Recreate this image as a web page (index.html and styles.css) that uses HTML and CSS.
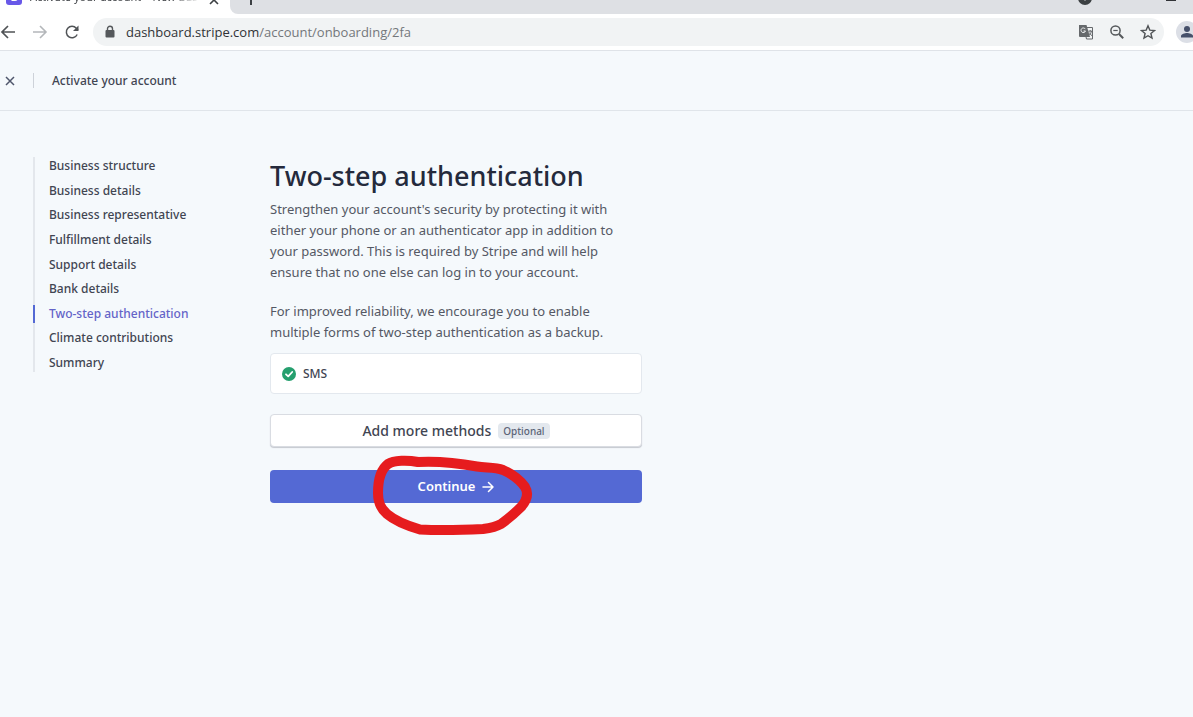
FILE: index.html
```html
<!DOCTYPE html>
<html lang="en">
<head>
<meta charset="utf-8">
<title>Activate your account</title>
<link rel="stylesheet" href="styles.css">
</head>
<body>
<div class="tabstrip">
  <div class="tab">
    <svg class="favicon" width="16" height="16" viewBox="0 0 16 16"><rect width="16" height="16" rx="3" fill="#6858e8"/><path d="M5.500 11h3.500c2.500 0 2.500-4 0-4H6" fill="none" stroke="#fff" stroke-width="2"/></svg>
    <span class="tab-title">Activate your account – New Bus</span>
    <button class="tab-close" aria-label="Close tab"><svg width="10" height="10" viewBox="0 0 10 10"><path d="M1 1l8 8M9 1L1 9" stroke="#3c4043" stroke-width="1.600"/></svg></button>
  </div>
  <div class="strip-rest">
    <button class="new-tab" aria-label="New tab"><svg width="12" height="12" viewBox="0 0 12 12"><path d="M6 0v12M0 6h12" stroke="#3c4043" stroke-width="2"/></svg></button>
    <span class="window-tools">
      <svg width="14" height="14" viewBox="0 0 14 14"><circle cx="7" cy="7" r="7" fill="#3c4043"/><path d="M4 6h6l-3 4z" fill="#dee0e4"/></svg>
      <svg width="10" height="14" viewBox="0 0 10 14"><path d="M0 9h10" stroke="#303236" stroke-width="2"/></svg>
    </span>
  </div>
</div>
<div class="toolbar">
  <button class="tool" aria-label="Back"><svg width="16" height="16" viewBox="0 0 16 16"><path d="M15 8H2M8 2L2 8l6 6" fill="none" stroke="#505356" stroke-width="1.700"/></svg></button>
  <button class="tool" aria-label="Forward"><svg width="16" height="16" viewBox="0 0 16 16"><path d="M1 8h13M8 2l6 6-6 6" fill="none" stroke="#b4b7ba" stroke-width="1.600"/></svg></button>
  <button class="tool" aria-label="Reload"><svg width="16" height="16" viewBox="0 0 16 16"><path d="M13.200 10.500A5.700 5.700 0 1 1 12.300 4.200L14 6" fill="none" stroke="#505356" stroke-width="1.500"/><path d="M14.500 1.500v5.500H9z" fill="#505356"/></svg></button>
  <div class="address">
    <svg width="10" height="14" viewBox="0 0 10 14"><rect x="0.500" y="5" width="9" height="7.500" rx="1" fill="#55585b"/><path d="M2.500 6V3.800a2.500 2.500 0 0 1 5 0V6" fill="none" stroke="#55585b" stroke-width="1.400"/></svg>
    <span class="url"><span class="host">dashboard.stripe.com</span>/account/onboarding/2fa</span>
    <span class="address-tools">
      <svg width="16" height="16" viewBox="0 0 16 16"><path d="M1 1h7.500l3.500 12H2a1 1 0 0 1-1-1z" fill="#66696c"/><path d="M9 3.500h5.500V15H8.500L8 12.800" fill="none" stroke="#66696c"/><path d="M7.300 5.100A2.300 2.300 0 1 0 7.500 7H5.500" fill="none" stroke="#f1f3f4"/><path d="M10.300 7.200h4M12.200 6v1M13.500 7.200c-.3 1.800-1.200 3-2.300 4M11.200 8.500l2.600 3.300" fill="none" stroke="#66696c"/></svg>
      <svg width="16" height="16" viewBox="0 0 16 16"><circle cx="6.500" cy="6.500" r="4.600" fill="none" stroke="#55585b" stroke-width="1.500"/><path d="M4.300 6.500h4.400" stroke="#55585b" stroke-width="1.200"/><path d="M10 10l4.200 4.200" stroke="#55585b" stroke-width="2"/></svg>
      <svg width="16" height="16" viewBox="0 0 16 16"><path d="M8 1.800l1.800 4.300 4.700.4-3.600 3 1.100 4.600L8 11.700l-4 2.400 1.100-4.600-3.600-3 4.700-.4z" fill="none" stroke="#505356" stroke-width="1.400"/></svg>
    </span>
  </div>
  <svg class="avatar" width="22" height="22" viewBox="0 0 22 22"><circle cx="11" cy="11" r="11" fill="#dcdfe6"/><circle cx="11" cy="8" r="3" fill="#46506a"/><path d="M5 16.500v-1.500c0-2 4-3 6-3s6 1 6 3v1.500z" fill="#46506a"/></svg>
</div>
<header class="header">
  <button class="close" aria-label="Close"><svg width="10" height="10" viewBox="0 0 10 10"><path d="M1 1l8 8M9 1L1 9" stroke="#4f566b" stroke-width="1.500"/></svg></button>
  <span class="header-title">Activate your account</span>
</header>
<div class="content">
  <nav class="steps">
    <a href="#">Business structure</a>
    <a href="#">Business details</a>
    <a href="#">Business representative</a>
    <a href="#">Fulfillment details</a>
    <a href="#">Support details</a>
    <a href="#">Bank details</a>
    <a href="#" class="current" aria-current="step">Two-step authentication</a>
    <a href="#">Climate contributions</a>
    <a href="#">Summary</a>
  </nav>
  <main class="panel">
    <h1>Two-step authentication</h1>
    <p>Strengthen your account's security by protecting it with<br>either your phone or an authenticator app in addition to<br>your password. This is required by Stripe and will help<br>ensure that no one else can log in to your account.</p>
    <p>For improved reliability, we encourage you to enable<br>multiple forms of two-step authentication as a backup.</p>
    <div class="method">
      <svg width="14" height="14" viewBox="0 0 14 14"><circle cx="7" cy="7" r="7" fill="#259f6e"/><path d="M4 7.300l2.200 2.100L10.200 5" fill="none" stroke="#fff" stroke-width="1.800" stroke-linecap="round" stroke-linejoin="round"/></svg>
      <span>SMS</span>
    </div>
    <button class="button secondary">Add more methods <span class="badge">Optional</span></button>
    <div class="submit">
      <button class="button primary">Continue <svg width="12" height="12" viewBox="0 0 12 12"><path d="M1 6h10M6.500 1.500L11 6l-4.500 4.500" fill="none" stroke="#fff" stroke-width="1.500" stroke-linecap="round" stroke-linejoin="round"/></svg></button>
      <svg class="marker" width="162" height="84" viewBox="372 454 162 84"><path d="M418 462C408 460 394 460 388 464C380 470 378 482 378 493C378 502 380 508 387 514C394 520 408 526 420 529.500C440 530.500 462 530 483 529C491 528 496 527 501 524C508 519 515 513 521 507C528 499 528 492 525 487C520 480 512 474 503 470C495 467 486 468 477 466.500C458 463 438 461 418 462" fill="none" stroke="#e61c1e" stroke-width="10" stroke-linecap="round" stroke-linejoin="round"/></svg>
    </div>
  </main>
</div>
</body>
</html>
```
FILE: styles.css
```css
* { box-sizing: border-box; }
body {
  margin: 0;
  min-height: 100vh;
  overflow-x: hidden;
  background: #f5f9fc;
  color: #414552;
  font: 13px/21px "Noto Sans", "Open Sans", sans-serif;
}
svg { display: block; flex: none; }
button { margin: 0; padding: 0; border: 0; background: none; font: inherit; color: inherit; }
.tabstrip { display: flex; height: 14px; overflow: hidden; background: #fff; }
.tab { display: flex; align-items: flex-end; gap: 8px; width: 230px; padding: 0 11px 9px 6px; }
.tab-title { flex: 1; height: 16px; overflow: hidden; white-space: nowrap; font-size: 11px; line-height: 16px; color: #45484c; -webkit-mask-image: linear-gradient(90deg, #000 80%, transparent); mask-image: linear-gradient(90deg, #000 80%, transparent); }
.strip-rest { flex: 1; display: flex; align-items: flex-end; justify-content: space-between; padding: 0 17px 9px 15px; background: #dee0e4; border-bottom-left-radius: 8px; }
.window-tools { display: flex; gap: 74px; }
.toolbar { display: flex; align-items: center; height: 37px; gap: 16px; border-bottom: 1px solid #dfe3e8; background: #fff; overflow: hidden; }
.address { flex: 1; display: flex; align-items: center; gap: 11px; height: 28px; margin: 0 -4px 0 -3px; padding: 0 8px 0 12px; border-radius: 14px; background: #f1f3f4; }
.url { flex: 1; font-family: "Open Sans", "Noto Sans", sans-serif; color: #74777b; }
.host { color: #303236; }
.address-tools { display: flex; gap: 15px; }
.avatar { margin-right: -5px; }
.header { display: flex; align-items: center; height: 60px; padding-left: 5px; border-bottom: 1px solid #e0e5ea; }
.close { padding-right: 18px; }
.header-title { padding-left: 18px; border-left: 1px solid #cdd2d9; font-size: 12px; line-height: 15px; font-weight: 500; }
.content { display: flex; align-items: flex-start; padding: 46px 24px 24px 33px; gap: 36px; }
.steps { display: flex; flex-direction: column; justify-content: space-between; min-height: 215px; width: 201px; border-left: 2px solid #e3e7ec; }
.steps a { margin-left: -2px; padding-left: 14px; border-left: 2px solid transparent; font-size: 12px; line-height: 18px; font-weight: 500; color: #414552; text-decoration: none; }
.steps .current { border-color: #5469d4; color: #6464c8; }
.panel { flex: 0 1 372px; }
h1 { margin: 0 0 5px; font-size: 27px; line-height: 37px; font-weight: 500; color: #242a3c; white-space: nowrap; }
p { margin: 0 0 18px; color: #545864; white-space: nowrap; }
.method { display: flex; align-items: center; gap: 7px; height: 41px; margin: -8px 0 20px; padding: 0 11px; border: 1px solid #e3e8ee; border-radius: 4px; background: #fff; font-size: 12px; font-weight: 500; }
.button { display: flex; align-items: center; justify-content: center; gap: 7px; width: 100%; height: 33px; border-radius: 4px; font-weight: 500; }
.secondary { border: 1px solid #d9dce2; background: #fff; box-shadow: 0 1px 1px #c5c8cf; font-size: 14px; }
.badge { padding: 0 5px; border-radius: 4px; background: #e3e8ee; color: #5c6478; font-size: 10px; line-height: 16px; }
.submit { position: relative; margin-top: 23px; }
.primary { background: #5469d4; color: #fff; font-weight: 600; }
.marker { position: absolute; left: 102px; top: -16px; pointer-events: none; }
```
